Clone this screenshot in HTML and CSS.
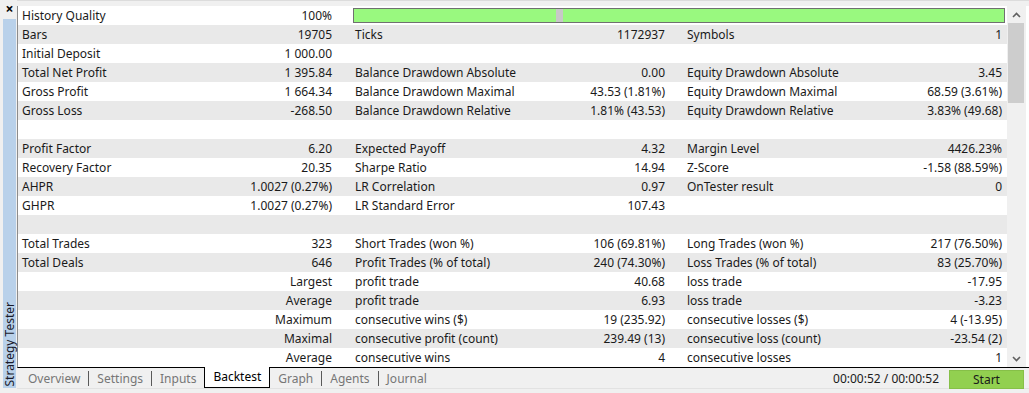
FILE: index.html
```html
<!DOCTYPE html>
<html lang="en">
<head>
  <meta charset="UTF-8" />
  <title>Strategy Tester</title>
  <link rel="stylesheet" href="styles.css">
</head>
<body>
  <div class="tester">
    <div class="side">
      <div class="close">×</div>
      <div class="strip"><span class="strip-title">Strategy Tester</span></div>
    </div>

    <div class="main">
      <div class="report">
        <div class="rows">
          <div class="row">
            <div class="cell"><span>History Quality</span><span>100%</span></div>
            <div class="quality"><div class="quality-bar"><i class="mark"></i></div></div>
          </div>
          <div class="row">
            <div class="cell"><span>Bars</span><span>19705</span></div>
            <div class="cell"><span>Ticks</span><span>1172937</span></div>
            <div class="cell"><span>Symbols</span><span>1</span></div>
          </div>
          <div class="row">
            <div class="cell"><span>Initial Deposit</span><span>1 000.00</span></div>
            <div class="cell"></div>
            <div class="cell"></div>
          </div>
          <div class="row">
            <div class="cell"><span>Total Net Profit</span><span>1 395.84</span></div>
            <div class="cell"><span>Balance Drawdown Absolute</span><span>0.00</span></div>
            <div class="cell"><span>Equity Drawdown Absolute</span><span>3.45</span></div>
          </div>
          <div class="row">
            <div class="cell"><span>Gross Profit</span><span>1 664.34</span></div>
            <div class="cell"><span>Balance Drawdown Maximal</span><span>43.53 (1.81%)</span></div>
            <div class="cell"><span>Equity Drawdown Maximal</span><span>68.59 (3.61%)</span></div>
          </div>
          <div class="row">
            <div class="cell"><span>Gross Loss</span><span>-268.50</span></div>
            <div class="cell"><span>Balance Drawdown Relative</span><span>1.81% (43.53)</span></div>
            <div class="cell"><span>Equity Drawdown Relative</span><span>3.83% (49.68)</span></div>
          </div>
          <div class="row">
            <div class="cell"></div><div class="cell"></div><div class="cell"></div>
          </div>
          <div class="row">
            <div class="cell"><span>Profit Factor</span><span>6.20</span></div>
            <div class="cell"><span>Expected Payoff</span><span>4.32</span></div>
            <div class="cell"><span>Margin Level</span><span>4426.23%</span></div>
          </div>
          <div class="row">
            <div class="cell"><span>Recovery Factor</span><span>20.35</span></div>
            <div class="cell"><span>Sharpe Ratio</span><span>14.94</span></div>
            <div class="cell"><span>Z-Score</span><span>-1.58 (88.59%)</span></div>
          </div>
          <div class="row">
            <div class="cell"><span>AHPR</span><span>1.0027 (0.27%)</span></div>
            <div class="cell"><span>LR Correlation</span><span>0.97</span></div>
            <div class="cell"><span>OnTester result</span><span>0</span></div>
          </div>
          <div class="row">
            <div class="cell"><span>GHPR</span><span>1.0027 (0.27%)</span></div>
            <div class="cell"><span>LR Standard Error</span><span>107.43</span></div>
            <div class="cell"></div>
          </div>
          <div class="row">
            <div class="cell"></div><div class="cell"></div><div class="cell"></div>
          </div>
          <div class="row">
            <div class="cell"><span>Total Trades</span><span>323</span></div>
            <div class="cell"><span>Short Trades (won %)</span><span>106 (69.81%)</span></div>
            <div class="cell"><span>Long Trades (won %)</span><span>217 (76.50%)</span></div>
          </div>
          <div class="row">
            <div class="cell"><span>Total Deals</span><span>646</span></div>
            <div class="cell"><span>Profit Trades (% of total)</span><span>240 (74.30%)</span></div>
            <div class="cell"><span>Loss Trades (% of total)</span><span>83 (25.70%)</span></div>
          </div>
          <div class="row">
            <div class="cell"><span></span><span>Largest</span></div>
            <div class="cell"><span>profit trade</span><span>40.68</span></div>
            <div class="cell"><span>loss trade</span><span>-17.95</span></div>
          </div>
          <div class="row">
            <div class="cell"><span></span><span>Average</span></div>
            <div class="cell"><span>profit trade</span><span>6.93</span></div>
            <div class="cell"><span>loss trade</span><span>-3.23</span></div>
          </div>
          <div class="row">
            <div class="cell"><span></span><span>Maximum</span></div>
            <div class="cell"><span>consecutive wins ($)</span><span>19 (235.92)</span></div>
            <div class="cell"><span>consecutive losses ($)</span><span>4 (-13.95)</span></div>
          </div>
          <div class="row">
            <div class="cell"><span></span><span>Maximal</span></div>
            <div class="cell"><span>consecutive profit (count)</span><span>239.49 (13)</span></div>
            <div class="cell"><span>consecutive loss (count)</span><span>-23.54 (2)</span></div>
          </div>
          <div class="row">
            <div class="cell"><span></span><span>Average</span></div>
            <div class="cell"><span>consecutive wins</span><span>4</span></div>
            <div class="cell"><span>consecutive losses</span><span>1</span></div>
          </div>
        </div>

        <div class="scrollbar">
          <div class="arrow">
            <svg width="9" height="6" viewBox="0 0 9 6"><path d="M1 5 L4.5 1.5 L8 5" fill="none" stroke="#606060" stroke-width="1.6"/></svg>
          </div>
          <div class="track"><div class="thumb"></div></div>
          <div class="arrow">
            <svg width="9" height="6" viewBox="0 0 9 6"><path d="M1 1 L4.5 4.5 L8 1" fill="none" stroke="#606060" stroke-width="1.6"/></svg>
          </div>
        </div>
      </div>

      <div class="tabbar">
        <div class="tabs">
          <span class="tab">Overview</span>
          <span class="sep"></span>
          <span class="tab">Settings</span>
          <span class="sep"></span>
          <span class="tab">Inputs</span>
          <span class="tab active">Backtest</span>
          <span class="tab">Graph</span>
          <span class="sep"></span>
          <span class="tab">Agents</span>
          <span class="sep"></span>
          <span class="tab">Journal</span>
        </div>
        <div class="timer">00:00:52 / 00:00:52</div>
        <button class="btn-start">Start</button>
      </div>
    </div>
  </div>
</body>
</html>
```

FILE: styles.css
```css
body {
  margin: 0;
  background: #f0f0f0;
  font-family: 'Noto Sans', sans-serif;
  font-size: 12px;
  color: #1a1a1a;
  overflow: hidden;
}
.tester {
  display: flex;
  height: 393px;
  width: 1029px;
}
.side {
  width: 17px;
  display: flex;
  flex-direction: column;
  padding-left: 3px;
  box-sizing: border-box;
}
.close {
  height: 19px;
  font-size: 14px;
  font-weight: bold;
  line-height: 17px;
  text-align: center;
  width: 13px;
  color: #000;
}
.strip {
  flex: 1;
  width: 13px;
  background: #b9d1ea;
  margin-bottom: 5px;
  display: flex;
  flex-direction: column;
  justify-content: flex-end;
  align-items: center;
}
.strip-title {
  writing-mode: vertical-rl;
  transform: rotate(180deg);
  font-size: 12px;
  line-height: 13px;
  color: #1a1a2a;
  padding-top: 2px;
}
.main {
  flex: 1;
  display: flex;
  flex-direction: column;
  padding-top: 5px;
  border-top: 1px solid #dcdcdc;
}
.report {
  display: flex;
  height: 361px;
  border-left: 1px solid #8c8c8c;
  border-bottom: 1px solid #000;
  background: #fff;
}
.rows {
  width: 989px;
}
.row {
  display: grid;
  grid-template-columns: 333px 333px 323px;
  height: 19px;
  line-height: 19px;
}
.row:nth-child(even) {
  background: #e9e9e9;
}
.cell {
  display: flex;
  justify-content: space-between;
  padding: 0 19px 0 4px;
  white-space: nowrap;
}
.cell:nth-child(3) {
  padding: 0 5px 0 3px;
}
.quality {
  grid-column: 2 / 4;
  padding: 2px 2px 2px 2px;
}
.quality-bar {
  height: 13px;
  background: #99f97f;
  border: 1px solid #707070;
  position: relative;
}
.mark {
  position: absolute;
  left: 202px;
  top: 0;
  width: 7px;
  height: 13px;
  background: #c8c8c8;
}
.scrollbar {
  width: 19px;
  background: #f0f0f0;
  display: flex;
  flex-direction: column;
}
.arrow {
  height: 17px;
  display: flex;
  align-items: center;
  justify-content: center;
}
.track {
  flex: 1;
}
.thumb {
  height: 80px;
  margin: 0 2px 0 1px;
  background: #cdcdcd;
}
.tabbar {
  display: flex;
  align-items: flex-start;
  height: 20px;
  border-bottom: 1px solid #e2e2e2;
}
.tabs {
  display: flex;
  align-items: center;
  padding-left: 3px;
  flex: 1;
  color: #767676;
}
.tab {
  padding: 0 8px;
  height: 19px;
  line-height: 19px;
}
.sep {
  width: 1px;
  height: 15px;
  background: #5a5a5a;
}
.tab.active {
  background: #fff;
  color: #000;
  border: 1px solid #000;
  border-top: none;
  margin: -1px 0 0 0;
  height: 20px;
  padding: 0 8px;
}
.timer {
  line-height: 22px;
  margin-right: 10px;
  color: #1a1a1a;
}
.btn-start {
  font-family: inherit;
  font-size: 12px;
  width: 75px;
  height: 19px;
  margin-top: 2px;
  margin-right: 5px;
  background: #92d050;
  border: 1px solid #86c048;
  color: #1a1a1a;
  padding: 0;
}
```
